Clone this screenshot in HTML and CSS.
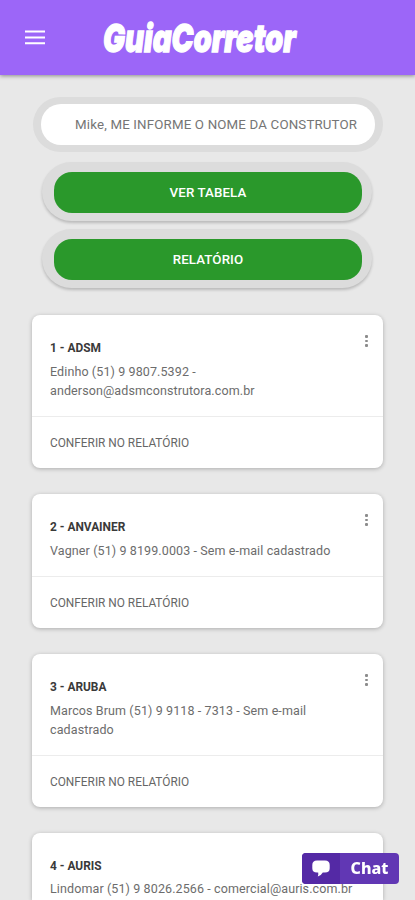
FILE: index.html
```
<!DOCTYPE html>
<html lang="pt-BR">
  <head>
    <meta charset="UTF-8" />
    <meta name="viewport" content="width=device-width, initial-scale=1.0" />
    <title>GuiaCorretor</title>
    <link rel="stylesheet" href="styles.css" />
  </head>
  <body>
    <header class="topbar">
      <button class="menu-btn" aria-label="Menu">
        <svg width="20" height="15" viewBox="0 0 20 15">
          <path d="M0 1.5h20M0 7.5h20M0 13.3h20" stroke="#fff" stroke-width="1.9" />
        </svg>
      </button>
      <svg class="logo" width="210" height="60" viewBox="0 0 210 60">
        <text x="3" y="44" textLength="193" lengthAdjust="spacingAndGlyphs">GuiaCorretor</text>
      </svg>
    </header>

    <main class="content">
      <div class="search">
        <input type="text" class="search-input" placeholder="Mike, ME INFORME O NOME DA CONSTRUTOR" />
      </div>
      <div class="btn-wrap"><button class="btn">VER TABELA</button></div>
      <div class="btn-wrap"><button class="btn">RELATÓRIO</button></div>

      <div class="cards">
        <div class="card">
          <div class="card-body">
            <h2>1 - ADSM</h2>
            <p>Edinho (51) 9 9807.5392 -<br />anderson@adsmconstrutora.com.br</p>
            <span class="dots"><i></i><i></i><i></i></span>
          </div>
          <div class="card-footer">CONFERIR NO RELATÓRIO</div>
        </div>

        <div class="card">
          <div class="card-body">
            <h2>2 - ANVAINER</h2>
            <p>Vagner (51) 9 8199.0003 - Sem e-mail cadastrado</p>
            <span class="dots"><i></i><i></i><i></i></span>
          </div>
          <div class="card-footer">CONFERIR NO RELATÓRIO</div>
        </div>

        <div class="card">
          <div class="card-body">
            <h2>3 - ARUBA</h2>
            <p>Marcos Brum (51) 9 9118 - 7313 - Sem e-mail<br />cadastrado</p>
            <span class="dots"><i></i><i></i><i></i></span>
          </div>
          <div class="card-footer">CONFERIR NO RELATÓRIO</div>
        </div>

        <div class="card card-last">
          <div class="card-body">
            <h2>4 - AURIS</h2>
            <p>Lindomar (51) 9 8026.2566 - comercial@auris.com.br</p>
          </div>
        </div>
      </div>
    </main>

    <button class="chat">
      <span class="chat-icon">
        <svg width="18" height="17" viewBox="0 0 18 17">
          <path d="M5 0.5h8Q17.7 0.5 17.7 5v3.2Q17.7 12.6 13 12.6h-2.2Q9.3 15.5 5.8 16.5Q6.6 14.6 6.2 12.6H5Q0.3 12.6 0.3 8.2V5Q0.3 0.5 5 0.5z" fill="#fff" />
        </svg>
      </span>
      <span class="chat-label">Chat</span>
    </button>
  </body>
</html>
```

FILE: styles.css
```
* {
  box-sizing: border-box;
}

body {
  margin: 0;
  height: 900px;
  overflow: hidden;
  background-color: #e8e8e8;
  font-family: Roboto, Arial, sans-serif;
}

button {
  border: none;
  padding: 0;
  font-family: inherit;
}

.topbar {
  display: flex;
  align-items: center;
  height: 75px;
  padding-left: 25px;
  background-color: #9c66f8;
  box-shadow: 0 1px 4px rgba(0, 0, 0, 0.4);
}

.menu-btn {
  display: flex;
  background: none;
}

.logo {
  margin-left: 55px;
  overflow: visible;
}

.logo text {
  font: italic 900 39px Inter, Roboto, sans-serif;
  fill: #fff;
  stroke: #fff;
  stroke-width: 1.3px;
}

.content {
  padding: 22px 32px 0;
}

.search {
  height: 55px;
  margin-left: 1px;
  padding: 7px 8px;
  border-radius: 28px;
  background-color: #dcdcdc;
}

.search-input {
  width: 100%;
  height: 41px;
  padding: 0 16px 0 34px;
  border: none;
  border-radius: 20px;
  background-color: #fff;
  font: 13.3px Roboto, Arial, sans-serif;
  letter-spacing: 0.16px;
}

.search-input::placeholder {
  color: #757575;
}

.btn-wrap {
  height: 59px;
  margin: 10px 11px 0 10px;
  padding: 10px 10px 0 12px;
  border-radius: 30px;
  background-color: #dcdcdc;
  box-shadow: 0 2px 3px rgba(0, 0, 0, 0.2);
}

.btn-wrap + .btn-wrap {
  margin-top: 8px;
}

.btn {
  display: block;
  width: 100%;
  height: 41px;
  border-radius: 18px;
  background-color: #2a982b;
  color: #fff;
  font-size: 13.3px;
  font-weight: 500;
  letter-spacing: 0.1px;
}

.cards {
  display: flex;
  flex-direction: column;
  gap: 26px;
  margin-top: 27px;
}

.card {
  border-radius: 8px;
  background-color: #fff;
  box-shadow: 0 1px 4px rgba(0, 0, 0, 0.26);
}

.card-body {
  position: relative;
  padding: 25px 17px 16.5px 18px;
  border-bottom: 1px solid #ececec;
}

/* runs off the bottom of the screen */
.card-last {
  height: 67px;
  border-radius: 8px 8px 0 0;
}

.card-last .card-body {
  padding-bottom: 0;
  border-bottom: none;
}

.card h2 {
  margin: 0 0 5.5px;
  color: #3a3a3a;
  font-size: 11.9px;
  font-weight: 700;
  line-height: 16px;
}

.card p {
  margin: 0;
  color: #6c6c6c;
  font-size: 12.5px;
  letter-spacing: 0.11px;
  line-height: 19px;
  white-space: nowrap;
}

.card-last p {
  line-height: 18px;
}

.card-footer {
  height: 51px;
  padding-left: 18px;
  color: #666;
  font-size: 11.85px;
  line-height: 53px;
}

.dots {
  position: absolute;
  top: 20px;
  right: 15px;
  display: flex;
  flex-direction: column;
  gap: 2px;
}

.dots i {
  width: 3px;
  height: 2.5px;
  border-radius: 1px;
  background-color: #8c8c8c;
}

.chat {
  position: fixed;
  right: 16px;
  bottom: 16px;
  display: flex;
  width: 97px;
  height: 31px;
  border-radius: 4px;
  overflow: hidden;
  background-color: #6137b4;
  color: #fff;
}

.chat-icon {
  display: flex;
  align-items: center;
  justify-content: center;
  width: 38px;
  height: 31px;
  background-color: #5429a5;
}

.chat-label {
  flex: 1;
  font: 800 16px/31px "Noto Sans", sans-serif;
}
```
